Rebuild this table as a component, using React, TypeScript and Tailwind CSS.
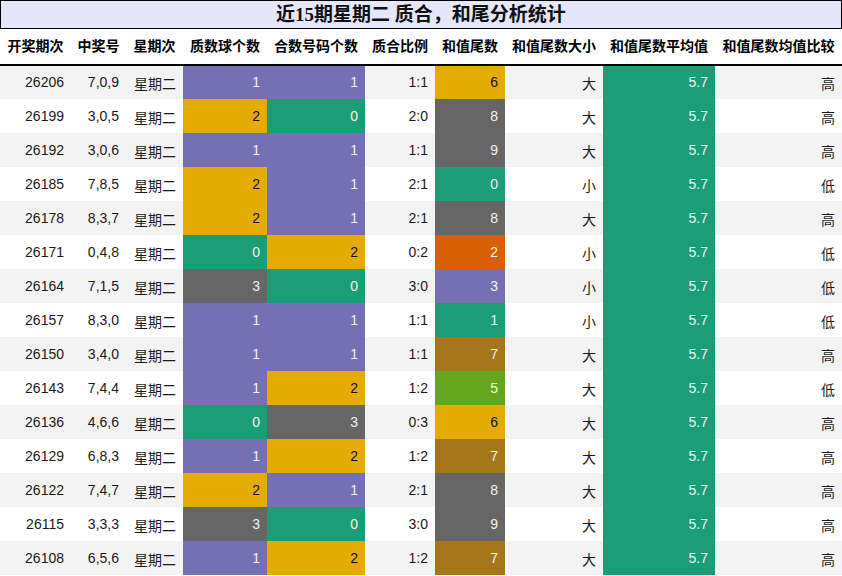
import React from 'react';

type Row = {
  issue: string;
  nums: string;
  prime: number;
  comp: number;
  ratio: string;
  tail: number;
  size: string;
  cmp: string;
};

const rows: Row[] = [
  { issue: '26206', nums: '7,0,9', prime: 1, comp: 1, ratio: '1:1', tail: 6, size: '大', cmp: '高' },
  { issue: '26199', nums: '3,0,5', prime: 2, comp: 0, ratio: '2:0', tail: 8, size: '大', cmp: '高' },
  { issue: '26192', nums: '3,0,6', prime: 1, comp: 1, ratio: '1:1', tail: 9, size: '大', cmp: '高' },
  { issue: '26185', nums: '7,8,5', prime: 2, comp: 1, ratio: '2:1', tail: 0, size: '小', cmp: '低' },
  { issue: '26178', nums: '8,3,7', prime: 2, comp: 1, ratio: '2:1', tail: 8, size: '大', cmp: '高' },
  { issue: '26171', nums: '0,4,8', prime: 0, comp: 2, ratio: '0:2', tail: 2, size: '小', cmp: '低' },
  { issue: '26164', nums: '7,1,5', prime: 3, comp: 0, ratio: '3:0', tail: 3, size: '小', cmp: '低' },
  { issue: '26157', nums: '8,3,0', prime: 1, comp: 1, ratio: '1:1', tail: 1, size: '小', cmp: '低' },
  { issue: '26150', nums: '3,4,0', prime: 1, comp: 1, ratio: '1:1', tail: 7, size: '大', cmp: '高' },
  { issue: '26143', nums: '7,4,4', prime: 1, comp: 2, ratio: '1:2', tail: 5, size: '大', cmp: '低' },
  { issue: '26136', nums: '4,6,6', prime: 0, comp: 3, ratio: '0:3', tail: 6, size: '大', cmp: '高' },
  { issue: '26129', nums: '6,8,3', prime: 1, comp: 2, ratio: '1:2', tail: 7, size: '大', cmp: '高' },
  { issue: '26122', nums: '7,4,7', prime: 2, comp: 1, ratio: '2:1', tail: 8, size: '大', cmp: '高' },
  { issue: '26115', nums: '3,3,3', prime: 3, comp: 0, ratio: '3:0', tail: 9, size: '大', cmp: '高' },
  { issue: '26108', nums: '6,5,6', prime: 1, comp: 2, ratio: '1:2', tail: 7, size: '大', cmp: '高' },
];

// count of primes / composites -> cell colour
const countColor: Record<number, string> = {
  0: 'bg-[#1b9e77] text-[#f2f2f2]',
  1: 'bg-[#7570b3] text-[#f2f2f2]',
  2: 'bg-[#e6ab02] text-[#111]',
  3: 'bg-[#666666] text-[#f2f2f2]',
};

const tailColor: Record<number, string> = {
  0: 'bg-[#1b9e77] text-[#f2f2f2]',
  1: 'bg-[#1b9e77] text-[#f2f2f2]',
  2: 'bg-[#d95f02] text-[#f2f2f2]',
  3: 'bg-[#7570b3] text-[#f2f2f2]',
  5: 'bg-[#66a61e] text-[#f2f2f2]',
  6: 'bg-[#e6ab02] text-[#111]',
  7: 'bg-[#a6761d] text-[#f2f2f2]',
  8: 'bg-[#666666] text-[#f2f2f2]',
  9: 'bg-[#666666] text-[#f2f2f2]',
};

const headers = [
  '开奖期次',
  '中奖号',
  '星期次',
  '质数球个数',
  '合数号码个数',
  '质合比例',
  '和值尾数',
  '和值尾数大小',
  '和值尾数平均值',
  '和值尾数均值比较',
];

const cell = 'h-[34px] px-[7px] text-right align-middle p-0';

export default function App() {
  return (
    <div className="w-[842px] bg-white font-['Liberation_Sans','Noto_Sans_CJK_SC',sans-serif] text-[14px] text-[#1a1a1a]">
      <div className="h-[29px] border border-black bg-[#e6e6fa] flex items-center justify-center font-['Liberation_Serif','Noto_Sans_CJK_SC',serif] text-[19px] font-bold text-[#111] leading-none">
        近15期星期二 质合，和尾分析统计
      </div>
      <table className="w-[842px] table-fixed border-collapse">
        <colgroup>
          <col className="w-[71px]" />
          <col className="w-[55px]" />
          <col className="w-[57px]" />
          <col className="w-[84px]" />
          <col className="w-[98px]" />
          <col className="w-[70px]" />
          <col className="w-[70px]" />
          <col className="w-[98px]" />
          <col className="w-[112px]" />
          <col className="w-[127px]" />
        </colgroup>
        <thead>
          <tr className="h-[36px] border-b-2 border-black">
            {headers.map((h) => (
              <th key={h} className="p-0 text-center font-bold text-[14px] text-black whitespace-nowrap">
                {h}
              </th>
            ))}
          </tr>
        </thead>
        <tbody>
          {rows.map((r, i) => (
            <tr key={r.issue} className={i % 2 === 0 ? 'bg-[#f3f3f3]' : 'bg-white'}>
              <td className={cell}>{r.issue}</td>
              <td className={cell}>{r.nums}</td>
              <td className={cell}>
                <span className="relative top-[2px]">星期二</span>
              </td>
              <td className={`${cell} ${countColor[r.prime]}`}>{r.prime}</td>
              <td className={`${cell} ${countColor[r.comp]}`}>{r.comp}</td>
              <td className={cell}>{r.ratio}</td>
              <td className={`${cell} ${tailColor[r.tail]}`}>{r.tail}</td>
              <td className={cell}>
                <span className="relative top-[2px]">{r.size}</span>
              </td>
              <td className={`${cell} bg-[#1b9e77] text-[#f2f2f2]`}>5.7</td>
              <td className={cell}>
                <span className="relative top-[2px]">{r.cmp}</span>
              </td>
            </tr>
          ))}
        </tbody>
      </table>
    </div>
  );
}
